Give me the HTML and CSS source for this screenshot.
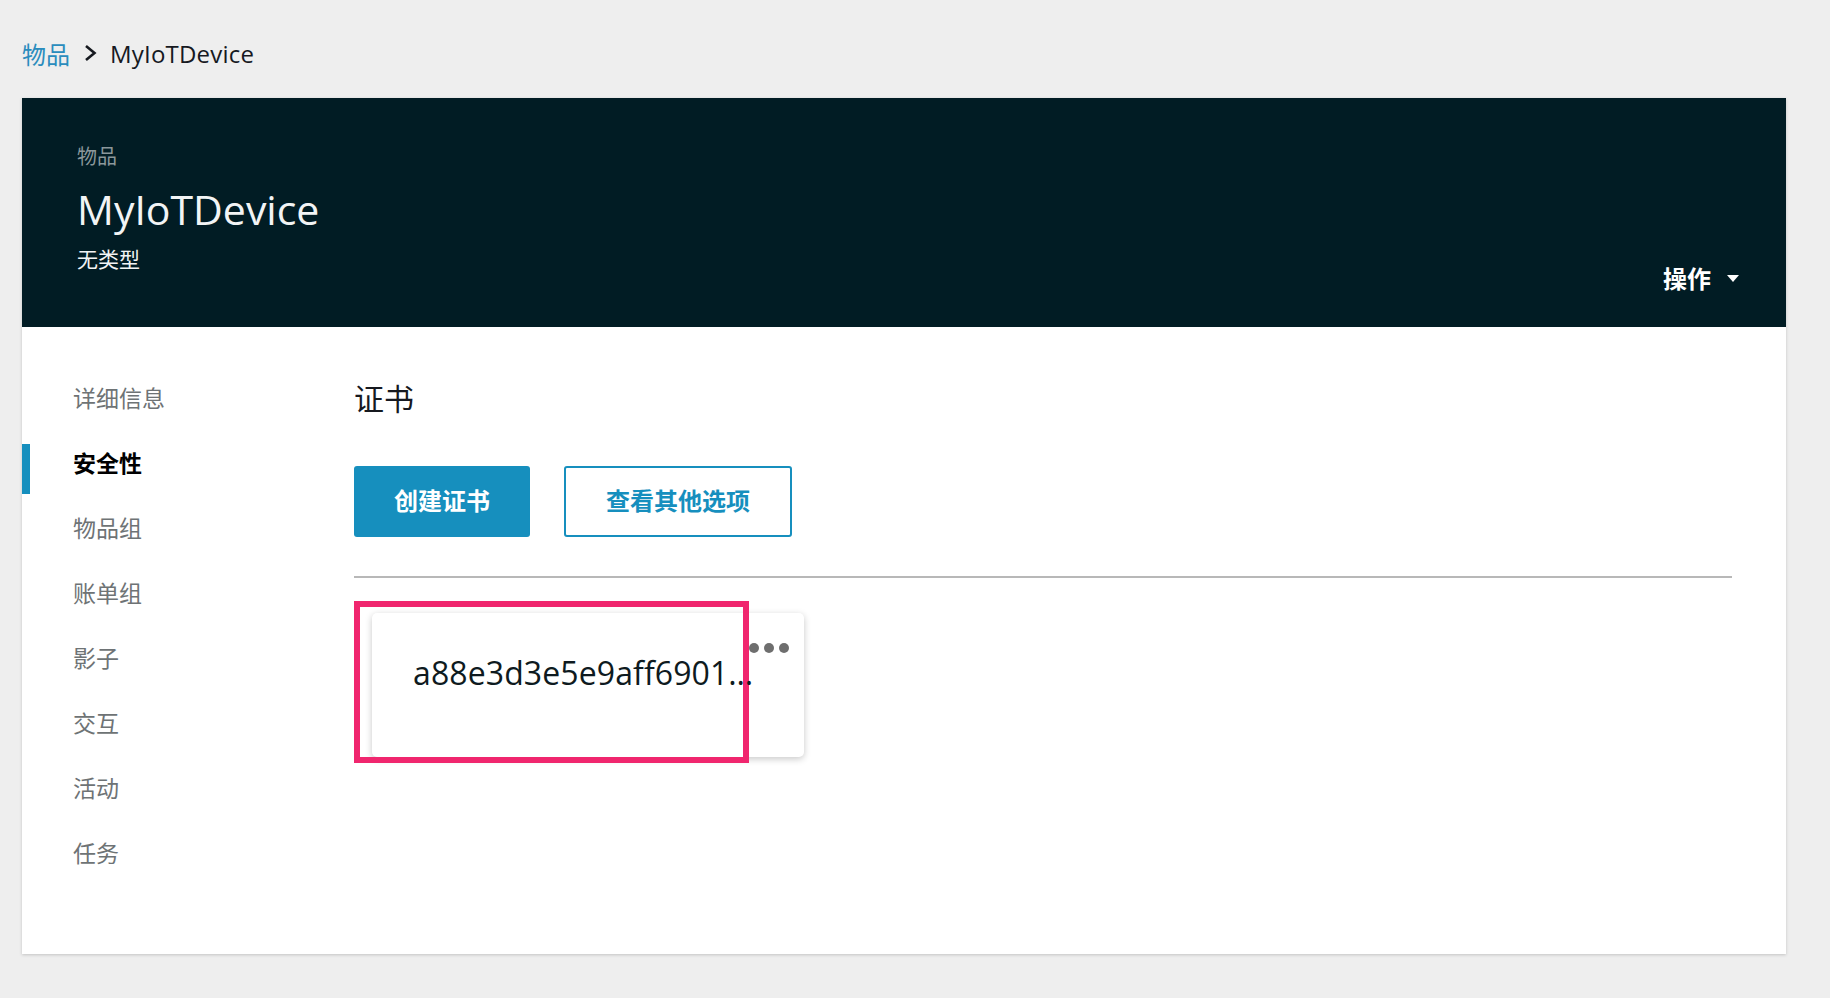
FILE: index.html
```html
<!DOCTYPE html>
<html lang="zh">
<head>
<meta charset="utf-8">
<title>MyIoTDevice</title>
<link rel="stylesheet" href="styles.css">
</head>
<body>
<nav class="breadcrumb">
  <a class="crumb-link" href="#">物品</a>
  <svg class="crumb-sep" width="13" height="18" viewBox="0 0 13 18"><path d="M2 2 L10.5 9 L2 16" fill="none" stroke="#16191f" stroke-width="2.6"/></svg>
  <span class="crumb-current">MyIoTDevice</span>
</nav>
<main class="panel">
  <header class="thing-header">
    <div class="thing-info">
      <div class="thing-label">物品</div>
      <h1 class="thing-title">MyIoTDevice</h1>
      <div class="thing-type">无类型</div>
    </div>
    <button class="actions">操作 <svg class="caret" width="12" height="7" viewBox="0 0 12 7"><path d="M0 0 H12 L6 7 Z" fill="#fff"/></svg></button>
  </header>
  <div class="panel-body">
    <ul class="side-nav">
      <li class="nav-item">详细信息</li>
      <li class="nav-item active">安全性</li>
      <li class="nav-item">物品组</li>
      <li class="nav-item">账单组</li>
      <li class="nav-item">影子</li>
      <li class="nav-item">交互</li>
      <li class="nav-item">活动</li>
      <li class="nav-item">任务</li>
    </ul>
    <section class="content">
      <h2 class="section-title">证书</h2>
      <div class="button-row">
        <button class="btn btn-primary">创建证书</button>
        <button class="btn btn-outline">查看其他选项</button>
      </div>
      <hr class="divider">
      <div class="cert-area">
        <div class="cert-card">
          <span class="cert-id">a88e3d3e5e9aff6901…</span>
          <span class="more-dots"><i></i><i></i><i></i></span>
        </div>
        <div class="highlight"></div>
      </div>
    </section>
  </div>
</main>
</body>
</html>
```
FILE: styles.css
```css
* { box-sizing: border-box; }
html, body { margin: 0; padding: 0; }
body {
  background: #eeeeee;
  font-family: "Open Sans", "Noto Sans CJK SC", sans-serif;
  color: #16191f;
  width: 1830px;
  height: 998px;
  overflow: hidden;
}
.breadcrumb {
  height: 98px;
  display: flex;
  align-items: center;
  padding: 8px 0 0 22px;
  font-size: 24px;
}
.crumb-link {
  color: #2a8cbd;
  text-decoration: none;
  font-family: "Noto Sans CJK SC", sans-serif;
  font-size: 24px;
}
.crumb-sep { margin: 0 13px 0 14px; }
.crumb-current { color: #16191f; letter-spacing: 0.2px; }

.panel {
  margin-left: 22px;
  width: 1764px;
  background: #fff;
  box-shadow: 0 1px 3px rgba(0,0,0,0.18);
}
.thing-header {
  height: 229px;
  background: #011c24;
  display: flex;
  justify-content: space-between;
  align-items: stretch;
  padding: 46px 47px 34px 55px;
}
.thing-info { display: flex; flex-direction: column; }
.thing-label {
  color: #8b979b;
  font-family: "Noto Sans CJK SC", sans-serif;
  font-size: 20px;
  line-height: 24px;
}
.thing-title {
  margin: 17px 0 0;
  color: #f2f4f5;
  font-weight: 400;
  font-size: 41px;
  line-height: 48px;
}
.thing-type {
  margin-top: 13px;
  color: #f2f4f5;
  font-family: "Noto Sans CJK SC", sans-serif;
  font-size: 21px;
  line-height: 24px;
}
.actions {
  align-self: flex-end;
  background: none;
  border: 0;
  padding: 0;
  color: #fff;
  font-family: "Noto Sans CJK SC", sans-serif;
  font-weight: 700;
  font-size: 24px;
  line-height: 30px;
  display: flex;
  align-items: center;
  gap: 16px;
}
.caret { margin-top: 1px; }

.panel-body {
  display: flex;
  height: 627px;
}
.side-nav {
  list-style: none;
  margin: 0;
  padding: 38px 0 0;
  width: 332px;
  flex: none;
}
.nav-item {
  position: relative;
  height: 65px;
  line-height: 65px;
  padding-left: 51px;
  font-family: "Noto Sans CJK SC", sans-serif;
  font-size: 23px;
  color: #6e7375;
}
.nav-item.active {
  color: #000;
  font-weight: 700;
}
.nav-item.active::before {
  content: "";
  position: absolute;
  left: 0;
  top: 14px;
  width: 8px;
  height: 50px;
  background: #168fbe;
}
.content {
  flex: 1;
  padding: 51px 54px 0 0;
}
.section-title {
  margin: 0;
  font-family: "Noto Sans CJK SC", sans-serif;
  font-weight: 400;
  font-size: 30px;
  line-height: 38px;
  color: #16191f;
}
.button-row {
  display: flex;
  gap: 34px;
  margin-top: 50px;
}
.btn {
  height: 71px;
  border-radius: 3px;
  font-family: "Noto Sans CJK SC", sans-serif;
  font-weight: 700;
  font-size: 24px;
  padding: 0 0 4px;
  cursor: pointer;
}
.btn-primary {
  width: 176px;
  background: #168fbe;
  border: 0;
  color: #fff;
}
.btn-outline {
  width: 228px;
  background: #fff;
  border: 2px solid #168fbe;
  color: #168fbe;
}
.divider {
  margin: 39px 0 0;
  border: 0;
  border-top: 2px solid #b8b8b8;
  height: 0;
}
.cert-area {
  position: relative;
  margin-top: 23px;
  padding: 12px 0 0 18px;
  width: 460px;
}
.cert-card {
  position: relative;
  width: 432px;
  height: 144px;
  background: #fff;
  border-radius: 5px;
  box-shadow: 0 2px 7px rgba(0,0,0,0.22);
  padding: 38px 0 0 41px;
}
.cert-id {
  position: relative;
  z-index: 2;
  display: block;
  font-size: 32px;
  line-height: 44px;
  letter-spacing: 0.1px;
  color: #0e1a20;
  white-space: nowrap;
}
.more-dots {
  position: absolute;
  top: 30px;
  left: 377px;
  display: flex;
  gap: 5px;
}
.more-dots i {
  display: block;
  width: 10px;
  height: 10px;
  border-radius: 50%;
  background: #6e6e6e;
}
.highlight {
  position: absolute;
  left: 0;
  top: 0;
  width: 395px;
  height: 162px;
  border: 6px solid #f0266e;
  pointer-events: none;
}
```
